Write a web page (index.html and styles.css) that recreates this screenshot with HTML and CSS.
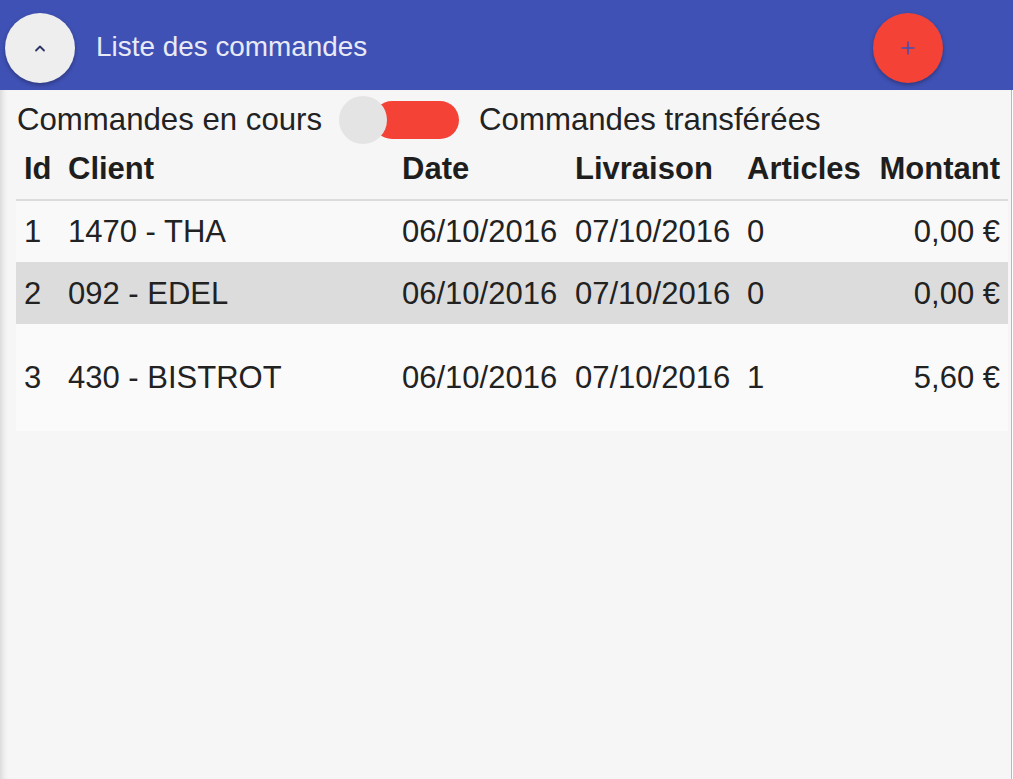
FILE: index.html
```html
<!DOCTYPE html>
<html lang="fr">
<head>
<meta charset="utf-8">
<title>Liste des commandes</title>
<link rel="stylesheet" href="styles.css">
</head>
<body>
<header class="appbar">
  <button class="menu-btn" type="button" aria-label="Réduire">
    <svg width="12" height="8" viewBox="0 0 12 8"><polyline points="2,6.5 6,2.5 10,6.5" fill="none" stroke="#2c3566" stroke-width="1.8" stroke-linecap="round" stroke-linejoin="round"/></svg>
  </button>
  <h1 class="title">Liste des commandes</h1>
  <button class="fab" type="button" aria-label="Ajouter">
    <svg width="16" height="16" viewBox="0 0 16 16"><path d="M8 1.5v13M1.5 8h13" stroke="#3f51b5" stroke-width="1.6" fill="none"/></svg>
  </button>
</header>
<main class="content">
  <div class="filter-row">
    <span class="filter-label">Commandes en cours</span>
    <span class="switch"><span class="switch-track"></span><span class="switch-thumb"></span></span>
    <span class="filter-label">Commandes transférées</span>
  </div>
  <table class="orders">
    <colgroup>
      <col class="c-id"><col class="c-client"><col class="c-date"><col class="c-liv"><col class="c-art"><col class="c-mt">
    </colgroup>
    <thead>
      <tr><th>Id</th><th>Client</th><th>Date</th><th>Livraison</th><th>Articles</th><th class="num">Montant</th></tr>
    </thead>
    <tbody>
      <tr><td>1</td><td>1470 - THA</td><td>06/10/2016</td><td>07/10/2016</td><td>0</td><td class="num">0,00 €</td></tr>
      <tr class="selected"><td>2</td><td>092 - EDEL</td><td>06/10/2016</td><td>07/10/2016</td><td>0</td><td class="num">0,00 €</td></tr>
      <tr class="tall"><td>3</td><td>430 - BISTROT</td><td>06/10/2016</td><td>07/10/2016</td><td>1</td><td class="num">5,60 €</td></tr>
    </tbody>
  </table>
</main>
</body>
</html>
```
FILE: styles.css
```css
html, body {
  margin: 0;
  padding: 0;
  height: 100%;
}
body {
  background: #ffffff;
  font-family: "Liberation Sans", Arial, sans-serif;
  color: #212121;
  display: flex;
  flex-direction: column;
}
.appbar {
  height: 90px;
  flex: none;
  background: #3f51b5;
  display: flex;
  align-items: center;
  padding: 0 70px 0 5px;
  box-sizing: border-box;
}
.menu-btn {
  width: 70px;
  height: 70px;
  border-radius: 50%;
  border: none;
  background: #eeeeee;
  box-shadow: 0 2px 4px rgba(0,0,0,0.3);
  display: flex;
  align-items: center;
  justify-content: center;
  padding: 0;
  margin-top: 6px;
}
.title {
  flex: 1;
  margin: 4px 0 0 21px;
  font-weight: normal;
  font-size: 27.9px;
  color: #e8eaf6;
}
.fab {
  width: 70px;
  height: 70px;
  border-radius: 50%;
  border: none;
  background: #f44336;
  box-shadow: 0 2px 4px rgba(0,0,0,0.3);
  display: flex;
  align-items: center;
  justify-content: center;
  padding: 0;
  margin-top: 6px;
}
.content {
  flex: 1;
  background: #f6f6f6;
  margin-right: 1px;
  border-right: 1px solid #b8b8b8;
  box-shadow: inset 7px 0 6px -5px rgba(0,0,0,0.14);
  padding: 0 3px 0 16px;
}
.filter-row {
  height: 56px;
  padding-top: 2px;
  display: flex;
  align-items: center;
  font-size: 31.2px;
  color: #222;
}
.filter-label {
  padding-left: 1px;
}
.switch {
  position: relative;
  width: 120px;
  height: 48px;
  margin: 0 19px 0 17px;
  flex: none;
}
.switch-track {
  position: absolute;
  left: 34px;
  top: 5px;
  width: 86px;
  height: 38px;
  border-radius: 19px;
  background: #f44336;
}
.switch-thumb {
  position: absolute;
  left: 0;
  top: 0;
  width: 48px;
  height: 48px;
  border-radius: 50%;
  background: #e4e4e4;
}
.orders {
  width: 992px;
  table-layout: fixed;
  border-collapse: collapse;
  font-size: 31px;
}
.c-id { width: 44px; }
.c-client { width: 334px; }
.c-date { width: 173px; }
.c-liv { width: 172px; }
.c-art { width: 132px; }
.c-mt { width: 137px; }
.orders th {
  font-weight: bold;
  text-align: left;
  height: 41px;
  padding: 0 8px 10px 8px;
  border-bottom: 2px solid #dcdcdc;
  white-space: nowrap;
  color: #1e1e1e;
}
.orders td {
  height: 61px;
  padding: 0 8px;
  white-space: nowrap;
  background: #f9f9f9;
  color: #222;
}
.orders .num {
  text-align: right;
}
.orders tr.selected td {
  background: #dcdcdc;
  padding-top: 1px;
}
.orders tr.tall td {
  height: 107px;
  background: #fafafa;
}
```
